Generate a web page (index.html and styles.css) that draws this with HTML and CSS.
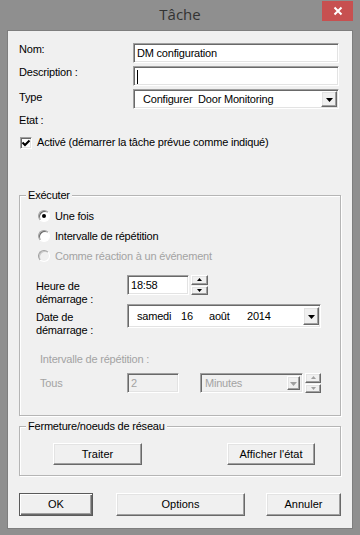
FILE: index.html
```html
<!DOCTYPE html>
<html lang="fr">
<head>
    <meta charset="UTF-8">
    <meta name="viewport" content="width=device-width, initial-scale=1.0">
    <title>Tâche</title>
    <link rel="stylesheet" href="styles.css">
</head>
<body>
    <div class="window">
        <header class="titlebar">
            <h1 class="title">Tâche</h1>
            <button class="close" aria-label="Fermer">
                <svg width="10" height="10" viewBox="0 0 10 10"><path d="M1.5 1.5 L8.5 8.5 M8.5 1.5 L1.5 8.5" stroke="#fff" stroke-width="2"/></svg>
            </button>
        </header>

        <main class="client">
            <div class="fields">
                <label class="lbl">Nom:</label>
                <div class="edit">DM configuration</div>
                <label class="lbl">Description :</label>
                <div class="edit"><span class="caret"></span></div>
                <label class="lbl lbl-type">Type</label>
                <div class="combo">
                    <span class="combo-text">Configurer&nbsp; Door Monitoring</span>
                    <span class="drop">
                        <svg width="7" height="4" viewBox="0 0 7 4"><path d="M0 0 H7 L3.5 4 Z" fill="#000"/></svg>
                    </span>
                </div>
                <div class="etat">Etat :</div>
            </div>

            <div class="check-row">
                <span class="checkbox">
                    <svg width="10" height="10" viewBox="0 0 10 10"><path d="M1.5 4.5 L4 7 L8.5 2.5" stroke="#000" stroke-width="2" fill="none"/></svg>
                </span>
                Activé (démarrer la tâche prévue comme indiqué)
            </div>

            <fieldset class="group group-exec">
                <legend>Exécuter</legend>
                <div class="radios">
                    <div class="radio-row"><span class="radio checked"></span>Une fois</div>
                    <div class="radio-row"><span class="radio"></span>Intervalle de répétition</div>
                    <div class="radio-row disabled"><span class="radio"></span>Comme réaction à un événement</div>
                </div>

                <div class="sched">
                    <div class="sched-label first">Heure de<br>démarrage :</div>
                    <div class="time">
                        <div class="edit time-edit">18:58</div>
                        <div class="spin">
                            <span class="spin-btn"><svg width="5" height="3" viewBox="0 0 5 3"><path d="M0 3 H5 L2.5 0 Z" fill="#000"/></svg></span>
                            <span class="spin-btn"><svg width="5" height="3" viewBox="0 0 5 3"><path d="M0 0 H5 L2.5 3 Z" fill="#000"/></svg></span>
                        </div>
                    </div>
                    <div class="sched-label">Date de<br>démarrage :</div>
                    <div class="date">
                        <span class="d-day">samedi</span><span class="d-num">16</span><span class="d-month">août</span><span>2014</span>
                        <span class="drop date-drop">
                            <svg width="7" height="4" viewBox="0 0 7 4"><path d="M0 0 H7 L3.5 4 Z" fill="#000"/></svg>
                        </span>
                    </div>
                </div>

                <div class="repeat-title">Intervalle de répétition :</div>
                <div class="repeat-row">
                    <span class="tous">Tous</span>
                    <div class="edit off num-edit">2</div>
                    <div class="combo off unit-combo">
                        <span class="combo-text">Minutes</span>
                        <span class="drop">
                            <svg width="7" height="4" viewBox="0 0 7 4"><path d="M0 0 H7 L3.5 4 Z" fill="#a0a0a0"/></svg>
                        </span>
                    </div>
                    <div class="spin unit-spin">
                        <span class="spin-btn"><svg width="5" height="3" viewBox="0 0 5 3"><path d="M0 3 H5 L2.5 0 Z" fill="#a0a0a0"/></svg></span>
                        <span class="spin-btn"><svg width="5" height="3" viewBox="0 0 5 3"><path d="M0 0 H5 L2.5 3 Z" fill="#a0a0a0"/></svg></span>
                    </div>
                </div>
            </fieldset>

            <fieldset class="group group-net">
                <legend>Fermeture/noeuds de réseau</legend>
                <div class="net-buttons">
                    <button class="btn btn-traiter">Traiter</button>
                    <button class="btn btn-etat">Afficher l'état</button>
                </div>
            </fieldset>

            <div class="actions">
                <button class="btn btn-default btn-ok">OK</button>
                <button class="btn btn-options">Options</button>
                <button class="btn btn-cancel">Annuler</button>
            </div>
        </main>
    </div>
</body>
</html>
```

FILE: styles.css
```css
/* Colours of the classic dialog */
:root {
    --frame: #8f8f8f;
    --face: #f0f0f0;
    --light: #ffffff;
    --shadow: #a0a0a0;
    --dark: #696969;
    --soft: #e3e3e3;
    --disabled: #a3a3a3;
}

* {
    margin: 0;
    padding: 0;
    box-sizing: border-box;
}

body {
    font-family: "Liberation Sans", Arial, sans-serif;
    font-size: 11px;
    line-height: 13px;
    letter-spacing: -0.2px;
    color: #000;
    background: var(--frame);
}

/* Window frame */
.window {
    height: 535px;
    display: flex;
    flex-direction: column;
}

.titlebar {
    height: 30px;
    display: grid;
    grid-template-columns: 1fr auto 1fr;
    align-items: start;
}

.title {
    grid-column: 2;
    font-family: "Open Sans", sans-serif;
    font-size: 15px;
    font-weight: normal;
    line-height: 20px;
    letter-spacing: 0;
    margin-top: 4px;
    color: #333;
}

.close {
    grid-column: 3;
    justify-self: end;
    width: 31px;
    height: 20px;
    margin: 1px 7px 0 0;
    border: none;
    background: #c75050;
    display: flex;
    align-items: center;
    justify-content: center;
}

.client {
    flex: 1;
    margin: 0 7px 6px;
    border: 1px solid #7e7e7e;
    background: var(--face);
    padding: 12px 11px 0;
}

/* Sunken controls */
.edit,
.combo,
.date {
    background: #fff;
    border: 1px solid;
    border-color: var(--shadow) var(--light) var(--light) var(--shadow);
    box-shadow: inset 1px 1px var(--dark), inset -1px -1px var(--soft);
}

.edit {
    height: 20px;
    padding: 1px 3px;
    line-height: 16px;
}

.caret {
    display: inline-block;
    width: 1px;
    height: 14px;
    margin-top: 2px;
    background: #000;
}

.combo {
    height: 20px;
    display: flex;
    align-items: center;
    padding: 1px;
}

.combo-text {
    flex: 1;
    padding-left: 8px;
}

.drop,
.spin-btn,
.btn {
    background: var(--face);
    border: 1px solid;
    border-color: var(--light) var(--dark) var(--dark) var(--light);
    box-shadow: inset -1px -1px var(--shadow), inset 1px 1px var(--soft);
}

.drop {
    width: 16px;
    height: 16px;
    display: flex;
    align-items: center;
    justify-content: center;
}

.drop svg {
    margin-top: 1px;
}

/* Top fields */
.fields {
    display: grid;
    grid-template-columns: 114px 206px;
    row-gap: 3px;
    align-items: start;
}

.lbl-type {
    padding-top: 2px;
}

.etat {
    grid-column: 1 / 3;
    margin-top: 2px;
}

.check-row {
    display: flex;
    align-items: center;
    gap: 5px;
    margin-top: 9px;
    height: 13px;
}

.checkbox {
    width: 12px;
    height: 12px;
    margin-left: 1px;
    background: #fff;
    border: 1px solid;
    border-color: var(--shadow) var(--light) var(--light) var(--shadow);
    box-shadow: inset 1px 1px var(--dark), inset -1px -1px var(--soft);
    display: flex;
    align-items: center;
    justify-content: center;
}

/* Group boxes */
.group {
    border: 1px solid #b5b5b5;
    box-shadow: 1px 1px 0 #fff, inset 1px 1px 0 #fff;
    min-inline-size: 0;
}

.group legend {
    margin-left: 6px;
    padding: 0 2px;
    line-height: 13px;
    background: var(--face);
}

.group-exec {
    margin-top: 40px;
    padding-bottom: 22px;
}

.radios {
    padding: 4px 0 0 18px;
}

.radio-row {
    display: flex;
    align-items: center;
    gap: 5px;
    height: 20px;
}

.radio {
    width: 12px;
    height: 12px;
    border-radius: 50%;
    background: #fff;
    border: 1px solid;
    border-color: var(--shadow) var(--light) var(--light) var(--shadow);
    box-shadow: inset 1px 1px var(--dark);
    display: flex;
    align-items: center;
    justify-content: center;
}

.radio.checked::after {
    content: "";
    width: 4px;
    height: 4px;
    border-radius: 50%;
    background: #000;
}

.radio-row.disabled {
    color: var(--disabled);
}

.radio-row.disabled .radio {
    background: var(--face);
    box-shadow: inset 1px 1px #c8c8c8;
}

.sched {
    display: grid;
    grid-template-columns: 91px auto;
    grid-template-rows: 29px 24px;
    align-items: start;
    margin-top: 9px;
    padding-left: 16px;
}

.sched-label {
    padding-top: 7px;
}

.sched-label.first {
    padding-top: 5px;
}

.time {
    display: flex;
    gap: 2px;
}

.time-edit {
    width: 62px;
}

.spin {
    width: 17px;
    height: 20px;
    display: flex;
    flex-direction: column;
    gap: 1px;
}

.spin-btn {
    flex: 1;
    display: flex;
    align-items: center;
    justify-content: center;
}

.date {
    width: 194px;
    height: 24px;
    display: flex;
    align-items: center;
    padding: 0 1px 0 9px;
}

.d-day {
    width: 44px;
}

.d-num {
    width: 28px;
}

.d-month {
    width: 38px;
}

.date-drop {
    margin-left: auto;
    height: 18px;
}

.repeat-title {
    margin: 25px 0 0 20px;
    color: var(--disabled);
}

.repeat-row {
    display: flex;
    align-items: center;
    margin-top: 7px;
    padding-left: 20px;
    color: var(--disabled);
}

.tous {
    width: 87px;
}

.edit.off,
.combo.off {
    background: var(--face);
}

.num-edit {
    width: 52px;
}

.unit-combo {
    width: 103px;
    margin-left: 21px;
}

.unit-combo .combo-text {
    padding-left: 3px;
}

.unit-combo .drop {
    width: 13px;
    height: 14px;
    margin-right: 1px;
}

.unit-spin {
    width: 16px;
    margin-left: 2px;
}

/* Network group */
.group-net {
    margin-top: 4px;
}

.net-buttons {
    display: flex;
    justify-content: space-between;
    padding: 10px 25px 10px 33px;
}

/* Buttons */
.btn {
    font: inherit;
    color: #000;
    height: 22px;
}

.btn-traiter {
    width: 89px;
}

.btn-etat {
    width: 88px;
}

.actions {
    display: flex;
    margin-top: 17px;
}

.actions .btn {
    height: 23px;
}

.btn-default {
    border-color: #5a5a5a;
    box-shadow: inset 1px 1px var(--light), inset -1px -1px var(--dark), inset -2px -2px var(--shadow);
}

.btn-ok {
    width: 74px;
}

.btn-options {
    width: 129px;
    margin-left: 23px;
}

.btn-cancel {
    width: 75px;
    margin-left: auto;
}
```
